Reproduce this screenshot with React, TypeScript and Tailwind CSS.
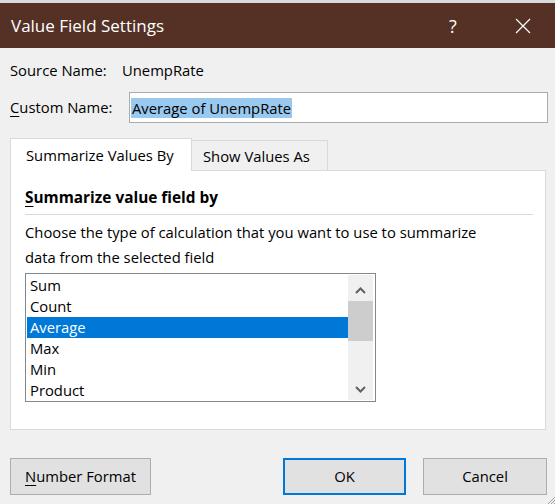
import React from "react";

const font = { fontFamily: '"Open Sans", "Noto Sans", sans-serif' };

function Chevron({ up }: { up?: boolean }) {
  return (
    <svg width="11" height="7" viewBox="0 0 11 7" className="block">
      <polyline
        points={up ? "1,6 5.5,1.5 10,6" : "1,1 5.5,5.5 10,1"}
        fill="none"
        stroke="#606060"
        strokeWidth="2"
      />
    </svg>
  );
}

export default function App() {
  const items = ["Sum", "Count", "Average", "Max", "Min", "Product"];
  return (
    <div
      className="relative w-[555px] h-[504px] bg-[#f0f0f0] border-t-[3px] border-[#dadada] text-[14.8px] text-black overflow-hidden"
      style={font}
    >
      {/* Title bar */}
      <div className="h-[45px] bg-[#543124] flex items-center text-white">
        <div className="pl-[11px] text-[17px] flex-1 leading-none">Value Field Settings</div>
        <div className="w-[60px] flex justify-center pr-[24px] text-[18px] leading-none">?</div>
        <div className="w-[60px] flex justify-center pr-[4px]">
          <svg width="16" height="16" viewBox="0 0 16 16">
            <path d="M1 1 L15 15 M15 1 L1 15" stroke="#ffffff" strokeWidth="1.2" fill="none" />
          </svg>
        </div>
      </div>

      {/* Body */}
      <div className="pl-[10px] pr-[7px]">
        <div className="flex items-center h-[20px] mt-[12px]">
          <div className="w-[112px]">Source Name:</div>
          <div>UnempRate</div>
        </div>

        <div className="flex items-center mt-[12px]">
          <div className="w-[119px]">
            <span className="underline underline-offset-[3px]">C</span>ustom Name:
          </div>
          <div className="w-[419px] h-[31px] bg-white border border-[#ababab] flex items-center pl-[1px]">
            <span className="bg-[#99c9ef] px-[1px] leading-[20px]">Average of UnempRate</span>
          </div>
        </div>

        {/* Tabs */}
        <div className="flex items-end mt-[15px] h-[33px] relative z-10">
          <div className="w-[182px] h-[33px] bg-white border-l border-t border-r border-[#d9d9d9] pl-[15px] pt-[5px]">
            Summarize Values By
          </div>
          <div className="w-[136px] h-[31px] bg-[#f0f0f0] border-t border-r border-b border-[#d9d9d9] pl-[11px] pt-[4px]">
            Show Values As
          </div>
        </div>

        {/* Panel */}
        <div className="w-[536px] h-[260px] -mt-px bg-white border border-[#d9d9d9] pl-[14px] pr-[12px] pt-[17px]">
          <div className="font-bold text-[15.4px] leading-[20px]">
            <span className="underline underline-offset-[3px]">S</span>ummarize value field by
          </div>
          <div className="h-px bg-[#d9d9d9] mt-[6px]" />
          <div className="leading-[25px] mt-[5px]">
            Choose the type of calculation that you want to use to summarize
            <br />
            data from the selected field
          </div>
          <div className="w-[351px] h-[129px] mt-[3px] border border-[#828790] p-[1px] flex">
            <div className="flex-1 flex flex-col">
              {items.map((it) => (
                <div
                  key={it}
                  className={
                    it === "Average"
                      ? "h-[21px] leading-[21px] pl-[3px] bg-[#0078d7] text-white"
                      : "h-[21px] leading-[21px] pl-[3px]"
                  }
                >
                  {it}
                </div>
              ))}
            </div>
            <div className="w-[25px] bg-[#f0f0f0] flex flex-col items-center mr-[1px]">
              <div className="h-[26px] flex items-center justify-center pt-[4px]">
                <Chevron up />
              </div>
              <div className="w-full h-[40px] bg-[#cdcdcd]" />
              <div className="flex-1 flex items-end justify-center pb-[7px]">
                <Chevron />
              </div>
            </div>
          </div>
        </div>

        {/* Buttons */}
        <div className="flex mt-[28px] items-center">
          <div className="w-[141px] h-[37px] bg-[#e1e1e1] border border-[#adadad] flex items-center justify-center">
            <span>
              <span className="underline underline-offset-[3px]">N</span>umber Format
            </span>
          </div>
          <div className="w-[123px] h-[37px] ml-[132px] bg-[#e1e1e1] border-2 border-[#0078d7] flex items-center justify-center">
            OK
          </div>
          <div className="w-[124px] h-[37px] ml-[17px] bg-[#e1e1e1] border border-[#adadad] flex items-center justify-center">
            Cancel
          </div>
        </div>
      </div>

      {/* resize grip */}
      <svg className="absolute right-0 bottom-0" width="8" height="8" viewBox="0 0 8 8">
        <path d="M8 1 L1 8 M8 4 L4 8 M8 7 L7 8" stroke="#a0a0a0" strokeWidth="1" />
      </svg>
    </div>
  );
}
